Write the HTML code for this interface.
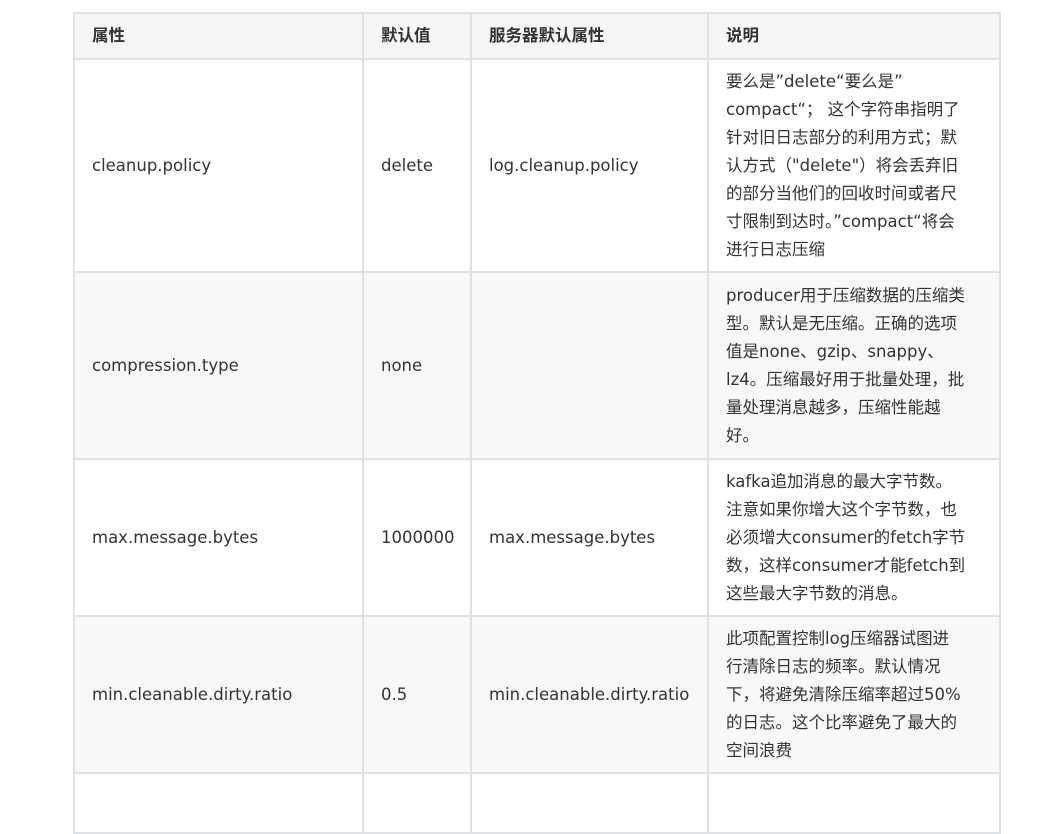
<!DOCTYPE html>
<html><head><meta charset="utf-8"><style>
body{margin:0;background:#fff;width:1043px;height:784px;overflow:hidden;}
table{position:absolute;left:73px;top:12px;border-collapse:collapse;table-layout:fixed;width:926px;
font-family:"DejaVu Sans","Noto Sans CJK SC",sans-serif;font-size:16.5px;color:#333;}
td,th{border:2px solid #dfe2e5;padding:0 0 0 17px;vertical-align:middle;text-align:left;line-height:28px;white-space:nowrap;}
th{font-weight:bold;background:#f6f6f6;height:44px;}
tr.g td{background:#f8f8f8;}
</style></head><body>
<table>
<colgroup><col style="width:289px"><col style="width:108px"><col style="width:237px"><col style="width:292px"></colgroup>
<tr><th>属性</th><th>默认值</th><th>服务器默认属性</th><th>说明</th></tr>
<tr style="height:213px"><td>cleanup.policy</td><td>delete</td><td>log.cleanup.policy</td><td>要么是”delete“要么是”<br>compact“； 这个字符串指明了<br>针对旧日志部分的利用方式；默<br>认方式（"delete"）将会丢弃旧<br>的部分当他们的回收时间或者尺<br>寸限制到达时。”compact“将会<br>进行日志压缩</td></tr>
<tr class="g" style="height:187px"><td>compression.type</td><td>none</td><td></td><td>producer用于压缩数据的压缩类<br>型。默认是无压缩。正确的选项<br>值是none、gzip、snappy、<br>lz4。压缩最好用于批量处理，批<br>量处理消息越多，压缩性能越<br>好。</td></tr>
<tr style="height:157px"><td>max.message.bytes</td><td>1000000</td><td>max.message.bytes</td><td>kafka追加消息的最大字节数。<br>注意如果你增大这个字节数，也<br>必须增大consumer的fetch字节<br>数，这样consumer才能fetch到<br>这些最大字节数的消息。</td></tr>
<tr class="g" style="height:157px"><td>min.cleanable.dirty.ratio</td><td>0.5</td><td>min.cleanable.dirty.ratio</td><td>此项配置控制log压缩器试图进<br>行清除日志的频率。默认情况<br>下，将避免清除压缩率超过50%<br>的日志。这个比率避免了最大的<br>空间浪费</td></tr>
<tr style="height:60px"><td></td><td></td><td></td><td></td></tr>
</table>
</body></html>
